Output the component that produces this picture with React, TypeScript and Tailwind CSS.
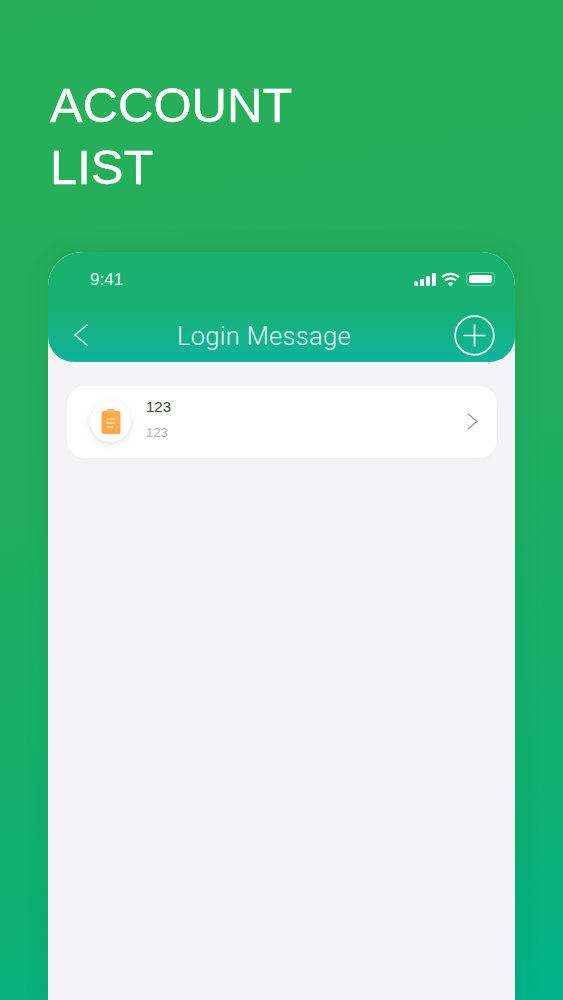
export default function App() {
  return (
    <div className="h-[1000px] w-full overflow-hidden bg-[linear-gradient(168deg,#28ae58_0%,#22ae5e_45%,#0fb070_80%,#00b38b_100%)] pt-[74px] font-['Liberation_Sans',sans-serif]">
      <h1 className="ml-[50px] text-[49px] font-normal leading-[62px] text-white [-webkit-text-stroke:0.4px_white]">
        ACCOUNT
        <br />
        LIST
      </h1>

      <div className="ml-[48px] mt-[54px] h-[800px] w-[467px] overflow-hidden rounded-t-[34px] bg-[#f4f3f5] shadow-[0_0_24px_rgba(0,90,60,0.12)]">
        <header className="h-[110px] rounded-b-[26px] bg-gradient-to-b from-[#1bb16b] via-[#17b176] to-[#10b39c] text-white">
          <div className="flex h-[54px] items-center justify-between pl-[42px] pr-[20px]">
            <span className="text-[17px] leading-none text-[#e6fbf0]">9:41</span>
            <div className="flex items-center gap-[5px]">
              <svg width="22" height="13" viewBox="0 0 22 13" fill="white">
                <rect x="0" y="8.5" width="4" height="4.5" rx="0.8" />
                <rect x="6" y="6" width="4" height="7" rx="0.8" />
                <rect x="12" y="3" width="4" height="10" rx="0.8" />
                <rect x="18" y="0" width="4" height="13" rx="0.8" />
              </svg>
              <svg width="19" height="15" viewBox="0 0 19 15" fill="none" stroke="white" strokeWidth="2.2">
                <path d="M1 5.2C5.8 .8 13.2 .8 18 5.2" />
                <path d="M4 8.4c3.2-2.8 7.8-2.8 11 0" />
                <path d="M9.5 14.2 6.9 11.4c1.5-1.2 3.7-1.2 5.2 0z" fill="white" strokeWidth="0.5" />
              </svg>
              <div className="ml-[1px] flex h-[14px] w-[29px] items-center rounded-[4px] border border-[#ffffff55] p-[2px]">
                <div className="h-full w-full rounded-[2px] bg-white" />
              </div>
            </div>
          </div>
          <div className="flex h-[56px] items-center pl-[25px] pr-[20px] pt-[2px]">
            <svg width="16" height="24" viewBox="0 0 16 24" fill="none" stroke="#e9fbf5" strokeWidth="1.6">
              <path d="M14.5 1.5 2 12l12.5 10.5" />
            </svg>
            <span className="ml-[88px] pt-[3px] text-[25.5px] font-['Roboto',sans-serif] font-light leading-none tracking-[0.3px] text-[#e4fbf4]">
              Login Message
            </span>
            <svg className="ml-auto" width="41" height="41" viewBox="0 0 41 41" fill="none" stroke="#f0fdf8" strokeWidth="1.7">
              <circle cx="20.5" cy="20.5" r="19.3" />
              <path d="M20.5 9.5v22M9.5 20.5h22" />
            </svg>
          </div>
        </header>

        <div className="pl-[19px] pr-[18px] pt-[24px]">
          <div className="flex h-[72px] items-center rounded-[18px] bg-white pl-[23px] pr-[19px] shadow-[0_2px_8px_rgba(0,0,0,0.02)]">
            <div className="mb-[2px] flex h-[41px] w-[41px] items-center justify-center rounded-full bg-white shadow-[0_2px_6px_rgba(120,130,150,0.25)]">
              <svg width="20" height="25" viewBox="0 0 20 25">
                <rect x="0.5" y="2" width="19" height="23" rx="2.5" fill="#fbaa4b" />
                <rect x="6" y="0" width="8" height="4" rx="1.5" fill="#fbb765" />
                <path d="M5.5 10h9M5.5 14h9M5.5 18h6" stroke="#fdd9a8" strokeWidth="1.6" />
              </svg>
            </div>
            <div className="ml-[15px] flex-1 pb-[6px]">
              <div className="text-[15px] leading-[18px] text-[#444444]">123</div>
              <div className="mt-[9px] text-[13px] leading-[16px] text-[#b4b4b4]">123</div>
            </div>
            <svg className="mb-[2px]" width="11" height="17" viewBox="0 0 11 17" fill="none" stroke="#9a9a9a" strokeWidth="1.3">
              <path d="M1 1 10 8.5 1 16" />
            </svg>
          </div>
        </div>
      </div>
    </div>
  );
}
